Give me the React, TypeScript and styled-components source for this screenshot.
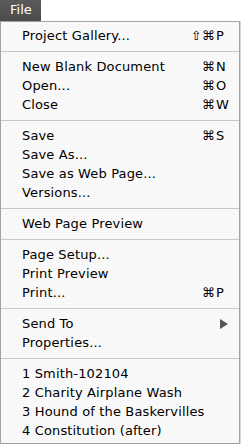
import React from 'react'
import styled, { createGlobalStyle } from 'styled-components'

type Entry =
  | { kind: 'item'; label: string; mods?: string; keyChar?: string; submenu?: boolean }
  | { kind: 'sep' }

const entries: Entry[] = [
  { kind: 'item', label: 'Project Gallery...', mods: '⇧⌘', keyChar: 'P' },
  { kind: 'sep' },
  { kind: 'item', label: 'New Blank Document', mods: '⌘', keyChar: 'N' },
  { kind: 'item', label: 'Open...', mods: '⌘', keyChar: 'O' },
  { kind: 'item', label: 'Close', mods: '⌘', keyChar: 'W' },
  { kind: 'sep' },
  { kind: 'item', label: 'Save', mods: '⌘', keyChar: 'S' },
  { kind: 'item', label: 'Save As...' },
  { kind: 'item', label: 'Save as Web Page...' },
  { kind: 'item', label: 'Versions...' },
  { kind: 'sep' },
  { kind: 'item', label: 'Web Page Preview' },
  { kind: 'sep' },
  { kind: 'item', label: 'Page Setup...' },
  { kind: 'item', label: 'Print Preview' },
  { kind: 'item', label: 'Print...', mods: '⌘', keyChar: 'P' },
  { kind: 'sep' },
  { kind: 'item', label: 'Send To', submenu: true },
  { kind: 'item', label: 'Properties...' },
  { kind: 'sep' },
  { kind: 'item', label: '1 Smith-102104' },
  { kind: 'item', label: '2 Charity Airplane Wash' },
  { kind: 'item', label: '3 Hound of the Baskervilles' },
  { kind: 'item', label: '4 Constitution (after)' },
]

const GlobalStyle = createGlobalStyle`
  html, body {
    margin: 0;
    padding: 0;
    background: #fff;
  }
  body {
    font-family: "DejaVu Sans", "Liberation Sans", sans-serif;
    -webkit-font-smoothing: antialiased;
  }
`

const Screen = styled.div`
  width: 241px;
  height: 444px;
  overflow: hidden;
  display: flex;
  flex-direction: column;
`

const MenuBar = styled.div`
  height: 21px;
  display: flex;
  background: #fff;
`

const BarTitle = styled.div`
  width: 41px;
  height: 21px;
  box-sizing: border-box;
  padding-left: 10px;
  background: linear-gradient(#5a5a5a, #4c4c4c);
  color: #fff;
  font-size: 13px;
  line-height: 20px;
`

const Menu = styled.div`
  width: 240px;
  flex: 1;
  box-sizing: border-box;
  border: 1px solid #a2a2a2;
  box-shadow: 1px 0 0 #d8d8d8;
  padding: 4px 0 3px;
  background: repeating-linear-gradient(#f6f6f6 0 1px, #fbfbfb 1px 2px);
  display: flex;
  flex-direction: column;
`

const Row = styled.div`
  height: 19px;
  display: flex;
  align-items: center;
  padding: 0 12px 0 21px;
  color: #000;
  font-size: 13px;
  letter-spacing: 0.15px;
  white-space: nowrap;
`

const Label = styled.span`
  flex: 1;
`

const Shortcut = styled.span`
  display: flex;
`

const Mods = styled.span`
  text-align: right;
  font-size: 13px;
`

const KeyChar = styled.span`
  width: 11px;
  padding-left: 1px;
  font-size: 13px;
`

const Arrow = styled.svg`
  width: 8px;
  height: 10px;
  margin-right: -1px;
`

const Separator = styled.div`
  height: 12px;
  display: flex;
  align-items: center;

  &::before {
    content: '';
    flex: 1;
    height: 1px;
    background: #c9c9c9;
  }
`

export default function App() {
  return (
    <>
      <GlobalStyle />
      <Screen>
        <MenuBar>
          <BarTitle>File</BarTitle>
        </MenuBar>
        <Menu>
          {entries.map((e, i) =>
            e.kind === 'sep' ? (
              <Separator key={i} />
            ) : (
              <Row key={i}>
                <Label>{e.label}</Label>
                {e.keyChar && (
                  <Shortcut>
                    <Mods>{e.mods}</Mods>
                    <KeyChar>{e.keyChar}</KeyChar>
                  </Shortcut>
                )}
                {e.submenu && (
                  <Arrow viewBox="0 0 8 10">
                    <path d="M0 0 L8 5 L0 10 Z" fill="#555" />
                  </Arrow>
                )}
              </Row>
            )
          )}
        </Menu>
      </Screen>
    </>
  )
}
